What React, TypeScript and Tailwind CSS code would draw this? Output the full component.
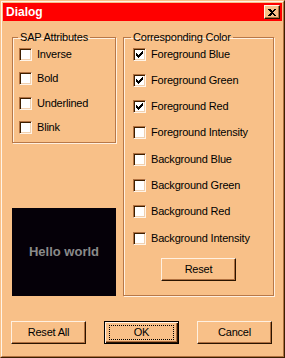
import React from "react";

const Check = ({ checked, label }: { checked?: boolean; label: string }) => (
  <div className="flex items-center h-[13px]">
    <div className="relative w-[13px] h-[13px] bg-white border border-t-[#b07040] border-l-[#b07040] border-r-[#fff4e8] border-b-[#fff4e8] shadow-[inset_1px_1px_0_#3c1e00,inset_-1px_-1px_0_#f0d0b0]">
      {checked && (
        <svg className="absolute left-[2px] top-[2px]" width="7" height="7" viewBox="0 0 7 7" shapeRendering="crispEdges">
          <path d="M0 2 L2 4 L6 0 L7 0 L7 3 L2 7 L0 5 Z" fill="#000" />
        </svg>
      )}
    </div>
    <span className="ml-[5px] leading-[13px]">{label}</span>
  </div>
);

const Btn = ({ label, def }: { label: string; def?: boolean }) => (
  <button
    className={
      "w-[75px] h-[23px] flex items-center justify-center leading-[13px] " +
      (def
        ? "border border-black shadow-[inset_1px_1px_0_#fff0e0,inset_-1px_-1px_0_#2a1400,inset_-2px_-2px_0_#b07040]"
        : "border border-t-[#fff0e0] border-l-[#fff0e0] border-r-[#2a1400] border-b-[#2a1400] shadow-[inset_-1px_-1px_0_#b07040]")
    }
  >
    {def ? (
      <span className="w-[65px] h-[15px] flex items-center justify-center border border-dotted border-black">
        {label}
      </span>
    ) : (
      label
    )}
  </button>
);

export default function App() {
  return (
    <div className="w-[285px] h-[358px] bg-[#f8c088] text-[11px] tracking-[-0.2px] text-black font-['Liberation_Sans',Arial,sans-serif]">
      <div className="h-full border border-t-[#f8c088] border-l-[#f8c088] border-r-[#3c1e00] border-b-[#3c1e00]">
        <div className="h-full p-[1px] border border-t-[#fff4e8] border-l-[#fff4e8] border-r-[#b07040] border-b-[#b07040] flex flex-col">
          {/* title bar */}
          <div className="h-[18px] bg-[#ff0000] flex items-center justify-between pl-[3px] pr-[2px]">
            <span className="text-white font-bold text-[12px] tracking-normal">Dialog</span>
            <div className="w-[16px] h-[14px] bg-[#f8c088] flex items-center justify-center border border-t-[#fff4e8] border-l-[#fff4e8] border-r-[#2a1400] border-b-[#2a1400] shadow-[inset_-1px_-1px_0_#b07040]">
              <svg width="8" height="7" viewBox="0 0 8 7" shapeRendering="crispEdges">
                <path d="M0 0 L2 0 L4 2 L6 0 L8 0 L5 3.5 L8 7 L6 7 L4 5 L2 7 L0 7 L3 3.5 Z" fill="#000" />
              </svg>
            </div>
          </div>

          {/* body */}
          <div className="flex mt-[10px] pl-[9px] gap-[7px]">
            {/* LEFT */}
            <div className="w-[104px] flex flex-col justify-between">
              <fieldset className="border border-[#b87848] shadow-[inset_1px_1px_0_#fff0e0,1px_1px_0_#fff0e0]">
                <legend className="ml-[5px] px-[2px] leading-[13px]">SAP Attributes</legend>
                <div className="flex flex-col gap-[11.5px] pt-[3.5px] pl-[6px] pb-[8px]">
                  <Check label="Inverse" />
                  <Check label="Bold" />
                  <Check label="Underlined" />
                  <Check label="Blink" />
                </div>
              </fieldset>
              <div className="h-[88px] bg-[#050008] flex items-center justify-center">
                <span className="text-[#8a8a8a] font-bold text-[13px] tracking-normal">Hello world</span>
              </div>
            </div>

            {/* RIGHT */}
            <fieldset className="w-[151px] border border-[#b87848] shadow-[inset_1px_1px_0_#fff0e0,1px_1px_0_#fff0e0]">
              <legend className="ml-[7px] px-[2px] leading-[13px]">Corresponding Color</legend>
              <div className="flex flex-col gap-[13.3px] pt-[3.5px] pl-[9px]">
                <Check checked label="Foreground Blue" />
                <Check checked label="Foreground Green" />
                <Check checked label="Foreground Red" />
                <Check label="Foreground Intensity" />
                <Check label="Background Blue" />
                <Check label="Background Green" />
                <Check label="Background Red" />
                <Check label="Background Intensity" />
              </div>
              <div className="flex justify-center mt-[13.5px] mb-[14px]">
                <Btn label="Reset" />
              </div>
            </fieldset>
          </div>

          {/* buttons */}
          <div className="flex justify-between pl-[8px] pr-[10px] mt-[25px]">
            <Btn label="Reset All" />
            <Btn label="OK" def />
            <Btn label="Cancel" />
          </div>
        </div>
      </div>
    </div>
  );
}
